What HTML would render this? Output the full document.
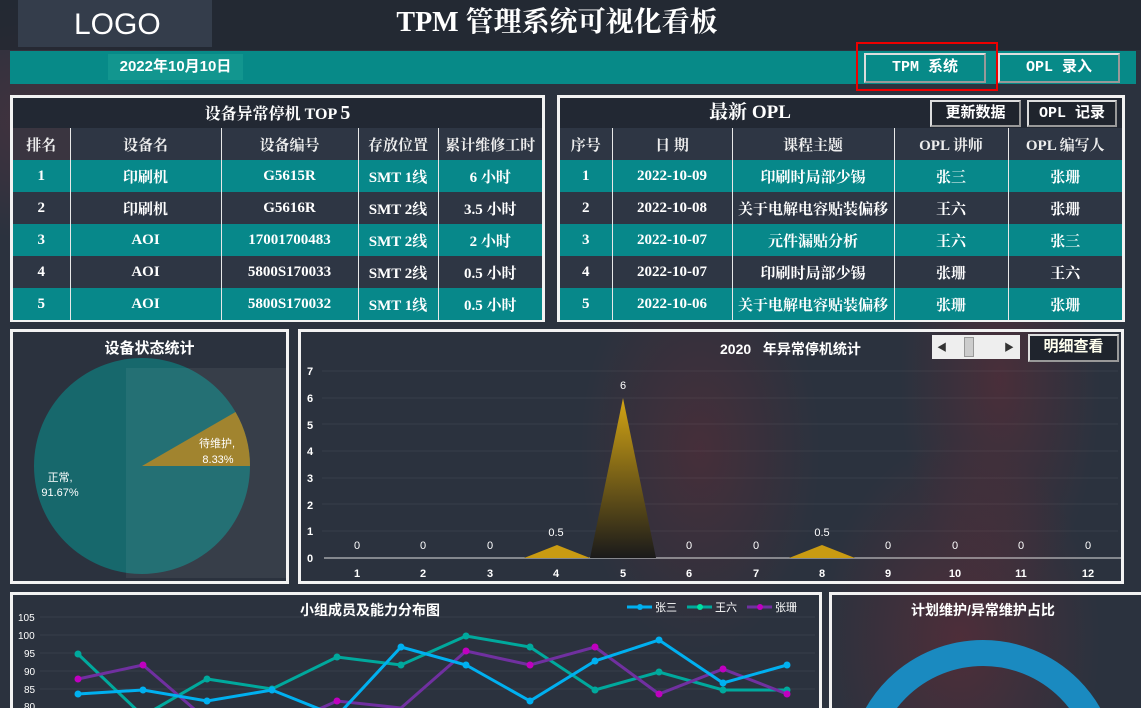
<!DOCTYPE html>
<html><head><meta charset="utf-8"><style>
*{margin:0;padding:0;box-sizing:border-box}
html,body{width:1141px;height:708px;overflow:hidden}
body{background:#2b323e;position:relative;font-family:"Liberation Serif","Noto Serif CJK SC","Noto Sans CJK SC",serif;color:#fff}
.abs{position:absolute}
.bg{left:0;top:0;width:1141px;height:708px;background:
radial-gradient(ellipse 120px 200px at 700px 450px,rgba(120,40,50,.35),transparent),
radial-gradient(ellipse 100px 220px at 1000px 380px,rgba(130,40,50,.35),transparent),
radial-gradient(ellipse 160px 120px at 40px 120px,rgba(110,50,60,.35),transparent),
radial-gradient(ellipse 140px 200px at 960px 640px,rgba(130,40,50,.4),transparent)}
.box{position:absolute;border:3px solid #f2f2f2}
table{border-collapse:collapse;position:absolute;font-weight:bold;font-size:15px;text-align:center}
td,th{border-left:1px solid #e8e8e8;height:32px;padding:0}
td:first-child,th:first-child{border-left:none}
th{background:#2e3644;font-size:15px;color:#eee}
tr.t td{background:#07888a}
tr.d td{background:#2e3644}
.btn{position:absolute;border:2px solid #ddd;border-right-color:#999;border-bottom-color:#999;font-family:"Liberation Mono","Noto Sans CJK SC",monospace;font-size:15px;text-align:center;font-weight:bold}
.sans{font-family:"Liberation Sans","Noto Sans CJK SC",sans-serif}
</style></head><body>
<div class="abs bg"></div>
<div class="abs" style="left:0;top:0;width:1141px;height:50px;background:rgba(30,35,45,.6)"></div>
<div class="abs sans" style="left:18px;top:0;width:194px;height:47px;background:#343d4b;font-size:30px;line-height:50px;padding-left:56px;">LOGO</div>
<div class="abs" style="left:0;top:4px;width:1114px;text-align:center;font-size:28px;font-weight:bold;line-height:38px">TPM 管理系统可视化看板</div>
<div class="abs" style="left:10px;top:51px;width:1126px;height:33px;background:#078a88"></div>
<div class="abs sans" style="left:108px;top:54px;width:135px;height:26px;background:#12968f;font-size:15px;font-weight:bold;line-height:26px;text-align:center">2022年10月10日</div>
<div class="btn" style="left:864px;top:53px;width:122px;height:30px;line-height:26px;background:#078a88">TPM 系统</div>
<div class="btn" style="left:998px;top:53px;width:122px;height:30px;line-height:26px;background:#078a88">OPL 录入</div>
<div class="abs" style="left:856px;top:42px;width:142px;height:49px;border:2px solid #e00"></div>

<div class="box" style="left:10px;top:95px;width:535px;height:227px"></div>
<div class="abs" style="left:13px;top:98px;width:529px;height:30px;background:#222833;text-align:center;font-size:16px;font-weight:bold;line-height:30px">设备异常停机 TOP <span style="font-size:20px">5</span></div>
<table style="left:13px;top:128px;width:529px">
<tr><th style="width:57px;background:#3a3540">排名</th><th style="width:151px">设备名</th><th style="width:137px">设备编号</th><th style="width:80px">存放位置</th><th>累计维修工时</th></tr>
<tr class="t"><td>1</td><td>印刷机</td><td>G5615R</td><td>SMT 1线</td><td>6 小时</td></tr>
<tr class="d"><td>2</td><td>印刷机</td><td>G5616R</td><td>SMT 2线</td><td>3.5 小时</td></tr>
<tr class="t"><td>3</td><td>AOI</td><td>17001700483</td><td>SMT 2线</td><td>2 小时</td></tr>
<tr class="d"><td>4</td><td>AOI</td><td>5800S170033</td><td>SMT 2线</td><td>0.5 小时</td></tr>
<tr class="t"><td>5</td><td>AOI</td><td>5800S170032</td><td>SMT 1线</td><td>0.5 小时</td></tr>
</table>

<div class="box" style="left:557px;top:95px;width:568px;height:227px"></div>
<div class="abs" style="left:560px;top:98px;width:562px;height:30px;background:#222833"></div>
<div class="abs" style="left:560px;top:98px;width:380px;text-align:center;font-size:19px;font-weight:bold;line-height:30px">最新 OPL</div>
<div class="btn" style="left:930px;top:100px;width:91px;height:27px;line-height:23px;background:#1f242d">更新数据</div>
<div class="btn" style="left:1027px;top:100px;width:90px;height:27px;line-height:23px;background:#1f242d">OPL 记录</div>
<table style="left:560px;top:128px;width:562px">
<tr><th style="width:52px">序号</th><th style="width:120px">日 期</th><th style="width:162px">课程主题</th><th style="width:114px">OPL 讲师</th><th>OPL 编写人</th></tr>
<tr class="t"><td>1</td><td>2022-10-09</td><td>印刷时局部少锡</td><td>张三</td><td>张珊</td></tr>
<tr class="d"><td>2</td><td>2022-10-08</td><td>关于电解电容贴装偏移</td><td>王六</td><td>张珊</td></tr>
<tr class="t"><td>3</td><td>2022-10-07</td><td>元件漏贴分析</td><td>王六</td><td>张三</td></tr>
<tr class="d"><td>4</td><td>2022-10-07</td><td>印刷时局部少锡</td><td>张珊</td><td>王六</td></tr>
<tr class="t"><td>5</td><td>2022-10-06</td><td>关于电解电容贴装偏移</td><td>张珊</td><td>张珊</td></tr>
</table>

<div class="box" style="left:10px;top:329px;width:279px;height:255px"></div>
<div class="abs sans" style="left:13px;top:337px;width:273px;text-align:center;font-size:15px;font-weight:bold">设备状态统计</div>
<svg class="abs" style="left:0;top:0" width="300" height="590">
<circle cx="142" cy="466" r="108" fill="#17686c"/>
<path d="M142 466 L250 466 A108 108 0 0 0 235.5 412 Z" fill="#9c7d22"/>
<rect x="126" y="368" width="160" height="210" fill="rgba(255,255,255,.06)"/>
<g font-family="Liberation Sans,Noto Sans CJK SC,sans-serif" font-size="11" fill="#fff" text-anchor="middle">
<text x="217" y="447">待维护,</text><text x="218" y="463">8.33%</text>
<text x="60" y="481">正常,</text><text x="60" y="496">91.67%</text></g>
</svg>

<div class="box" style="left:298px;top:329px;width:826px;height:255px"></div>
<div class="abs sans" style="left:720px;top:339px;font-size:14px;font-weight:bold">2020&nbsp;&nbsp;&nbsp;年异常停机统计</div>
<div class="abs" style="left:932px;top:335px;width:88px;height:24px;background:#eee"><div class="abs" style="left:32px;top:2px;width:10px;height:20px;background:#ccc;border:1px solid #999"></div><span class="abs" style="left:5px;top:4px;color:#333;font-size:10px">◀</span><span class="abs" style="left:72px;top:4px;color:#333;font-size:10px">▶</span></div>
<div class="btn" style="left:1028px;top:334px;width:91px;height:28px;line-height:24px;background:#1f242d;color:#ffe">明细查看</div>
<svg class="abs" style="left:0;top:0" width="1141" height="590">
<defs><linearGradient id="g" x1="0" y1="0" x2="0" y2="1"><stop offset="0" stop-color="#d4a514"/><stop offset="1" stop-color="#1a1a1a"/></linearGradient></defs>
<g stroke="rgba(255,255,255,.06)"><line x1="322" x2="1118" y1="531" y2="531"/><line x1="322" x2="1118" y1="504" y2="504"/><line x1="322" x2="1118" y1="478" y2="478"/><line x1="322" x2="1118" y1="451" y2="451"/><line x1="322" x2="1118" y1="424" y2="424"/><line x1="322" x2="1118" y1="398" y2="398"/><line x1="322" x2="1118" y1="371" y2="371"/></g>
<line x1="324" x2="1121" y1="558" y2="558" stroke="#ddd"/>
<path d="M590 558 L623 398 L656 558Z" fill="url(#g)"/>
<path d="M524 558 L557 545 L590 558Z" fill="#c99b12"/>
<path d="M789 558 L822 545 L855 558Z" fill="#c99b12"/>
<g font-family="Liberation Sans,sans-serif" font-size="11" font-weight="bold" fill="#fff" text-anchor="middle">
<text x="310" y="562">0</text><text x="310" y="535">1</text><text x="310" y="509">2</text><text x="310" y="482">3</text><text x="310" y="455">4</text><text x="310" y="429">5</text><text x="310" y="402">6</text><text x="310" y="375">7</text>
<text x="357" y="577">1</text><text x="423" y="577">2</text><text x="490" y="577">3</text><text x="556" y="577">4</text><text x="623" y="577">5</text><text x="689" y="577">6</text><text x="756" y="577">7</text><text x="822" y="577">8</text><text x="888" y="577">9</text><text x="955" y="577">10</text><text x="1021" y="577">11</text><text x="1088" y="577">12</text>
</g>
<g font-family="Liberation Sans,sans-serif" font-size="11" fill="#fff" text-anchor="middle">
<text x="357" y="549">0</text><text x="423" y="549">0</text><text x="490" y="549">0</text><text x="556" y="536">0.5</text><text x="623" y="389">6</text><text x="689" y="549">0</text><text x="756" y="549">0</text><text x="822" y="536">0.5</text><text x="888" y="549">0</text><text x="955" y="549">0</text><text x="1021" y="549">0</text><text x="1088" y="549">0</text>
</g>
</svg>

<div class="box" style="left:10px;top:592px;width:812px;height:116px;border-bottom:none"></div>
<div class="box" style="left:829px;top:592px;width:312px;height:116px;border-bottom:none;border-right:none"></div>
<div class="abs sans" style="left:300px;top:600px;font-size:14px;font-weight:bold">小组成员及能力分布图</div>
<div class="abs sans" style="left:829px;top:600px;width:308px;text-align:center;font-size:14px;font-weight:bold">计划维护/异常维护占比</div>
<svg class="abs" style="left:0;top:0" width="1141" height="708">
<g stroke="rgba(255,255,255,.06)"><line x1="40" x2="815" y1="617" y2="617"/><line x1="40" x2="815" y1="635" y2="635"/><line x1="40" x2="815" y1="653" y2="653"/><line x1="40" x2="815" y1="671" y2="671"/><line x1="40" x2="815" y1="689" y2="689"/></g>
<g font-family="Liberation Sans,sans-serif" font-size="10" fill="#fff"><text x="18" y="621">105</text><text x="18" y="639">100</text><text x="24" y="657">95</text><text x="24" y="675">90</text><text x="24" y="693">85</text><text x="24" y="710">80</text></g>
<polyline fill="none" stroke="#00a99d" stroke-width="3" points="78,654 143,716 207,679 272,689 337,657 401,665 466,636 530,647 595,690 659,672 723,690 787,690"/>
<polyline fill="none" stroke="#7030a0" stroke-width="3" points="78,679 143,665 207,720 272,730 337,701 401,708 466,651 530,665 595,647 659,694 723,669 787,694"/>
<polyline fill="none" stroke="#00b0f0" stroke-width="3" points="78,694 143,690 207,701 272,690 337,716 401,647 466,665 530,701 595,661 659,640 723,683 787,665"/>
<g fill="#00a99d"><circle cx="78" cy="654" r="3.5"/><circle cx="207" cy="679" r="3.5"/><circle cx="272" cy="689" r="3.5"/><circle cx="337" cy="657" r="3.5"/><circle cx="401" cy="665" r="3.5"/><circle cx="466" cy="636" r="3.5"/><circle cx="530" cy="647" r="3.5"/><circle cx="595" cy="690" r="3.5"/><circle cx="659" cy="672" r="3.5"/><circle cx="723" cy="690" r="3.5"/><circle cx="787" cy="690" r="3.5"/></g>
<g fill="#c000c0"><circle cx="78" cy="679" r="3.5"/><circle cx="143" cy="665" r="3.5"/><circle cx="337" cy="701" r="3.5"/><circle cx="466" cy="651" r="3.5"/><circle cx="530" cy="665" r="3.5"/><circle cx="595" cy="647" r="3.5"/><circle cx="659" cy="694" r="3.5"/><circle cx="723" cy="669" r="3.5"/><circle cx="787" cy="694" r="3.5"/></g>
<g fill="#00b0f0"><circle cx="78" cy="694" r="3.5"/><circle cx="143" cy="690" r="3.5"/><circle cx="207" cy="701" r="3.5"/><circle cx="272" cy="690" r="3.5"/><circle cx="401" cy="647" r="3.5"/><circle cx="466" cy="665" r="3.5"/><circle cx="530" cy="701" r="3.5"/><circle cx="595" cy="661" r="3.5"/><circle cx="659" cy="640" r="3.5"/><circle cx="723" cy="683" r="3.5"/><circle cx="787" cy="665" r="3.5"/></g>
<g stroke-width="3"><line x1="627" x2="652" y1="607" y2="607" stroke="#00b0f0"/><line x1="687" x2="712" y1="607" y2="607" stroke="#00a99d"/><line x1="747" x2="772" y1="607" y2="607" stroke="#7030a0"/></g>
<circle cx="640" cy="607" r="3" fill="#00b0f0"/><circle cx="700" cy="607" r="3" fill="#00e0a0"/><circle cx="760" cy="607" r="3" fill="#c000c0"/>
<g font-family="Liberation Sans,Noto Sans CJK SC,sans-serif" font-size="11" fill="#fff"><text x="655" y="611">张三</text><text x="715" y="611">王六</text><text x="775" y="611">张珊</text></g>
<circle cx="983" cy="775" r="122" fill="none" stroke="#1a8ac0" stroke-width="26"/>
</svg>
</body></html>
